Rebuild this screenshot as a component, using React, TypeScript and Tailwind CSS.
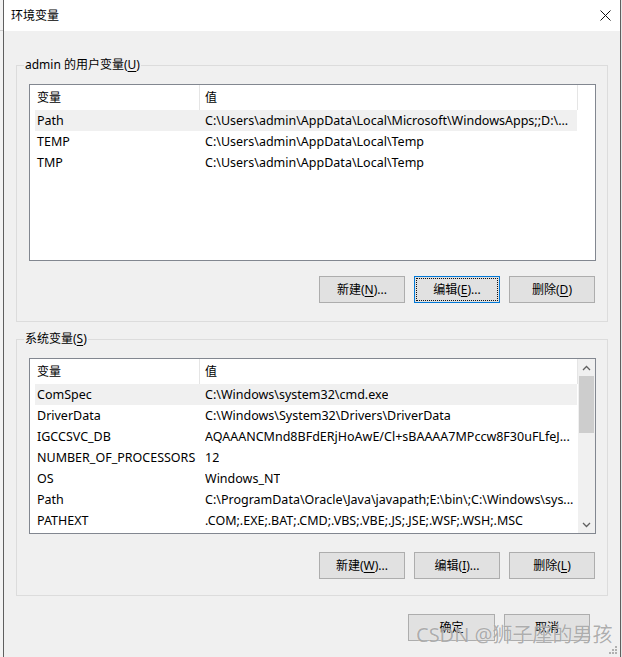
import React from "react";

const FONT = "font-['Noto_Sans','Noto_Sans_CJK_SC',sans-serif]";

type Row = { name: string; value: string; selected?: boolean };

const userRows: Row[] = [
  { name: "Path", value: "C:\\Users\\admin\\AppData\\Local\\Microsoft\\WindowsApps;;D:\\...", selected: true },
  { name: "TEMP", value: "C:\\Users\\admin\\AppData\\Local\\Temp" },
  { name: "TMP", value: "C:\\Users\\admin\\AppData\\Local\\Temp" },
];

const sysRows: Row[] = [
  { name: "ComSpec", value: "C:\\Windows\\system32\\cmd.exe", selected: true },
  { name: "DriverData", value: "C:\\Windows\\System32\\Drivers\\DriverData" },
  { name: "IGCCSVC_DB", value: "AQAAANCMnd8BFdERjHoAwE/Cl+sBAAAA7MPccw8F30uFLfeJ..." },
  { name: "NUMBER_OF_PROCESSORS", value: "12" },
  { name: "OS", value: "Windows_NT" },
  { name: "Path", value: "C:\\ProgramData\\Oracle\\Java\\javapath;E:\\bin\\;C:\\Windows\\sys..." },
  { name: "PATHEXT", value: ".COM;.EXE;.BAT;.CMD;.VBS;.VBE;.JS;.JSE;.WSF;.WSH;.MSC" },
];

function Header() {
  return (
    <div className="flex h-[25px] w-[548px] shrink-0 items-center border-r border-[#e5e5e5] text-[12px] text-black">
      <div className="flex h-full w-[170px] items-center border-r border-[#e5e5e5] pl-[7px]">变量</div>
      <div className="pl-[5px]">值</div>
    </div>
  );
}

function ListRows({ rows }: { rows: Row[] }) {
  return (
    <div className="flex flex-col">
      {rows.map((r, i) => (
        <div
          key={i}
          className={
            r.selected
              ? "ml-[5px] flex h-[21px] w-[542px] items-center whitespace-nowrap bg-[#f0f0f0] text-[12.5px] leading-[21px] text-black"
              : "ml-[5px] flex h-[21px] w-[542px] items-center whitespace-nowrap text-[12.5px] leading-[21px] text-black"
          }
        >
          <div className="w-[170px] shrink-0 overflow-hidden pl-[2px]">{r.name}</div>
          <div className="overflow-hidden">{r.value}</div>
        </div>
      ))}
    </div>
  );
}

function Btn({
  children,
  focused,
  w = "w-[86px]",
}: {
  children: React.ReactNode;
  focused?: boolean;
  w?: string;
}) {
  if (focused) {
    return (
      <div className={`flex h-[27px] ${w} items-center justify-center border border-[#0078d7] bg-[#e1e1e1] p-[1px] text-[12px] text-black`}>
        <div className="flex h-full w-full items-center justify-center border border-dotted border-[#111]">
          {children}
        </div>
      </div>
    );
  }
  return (
    <div className={`flex h-[27px] ${w} items-center justify-center border border-[#adadad] bg-[#e1e1e1] text-[12px] text-black`}>
      {children}
    </div>
  );
}

function U({ children }: { children: React.ReactNode }) {
  return <span className="underline underline-offset-[2px]">{children}</span>;
}

function Chevron({ up }: { up?: boolean }) {
  return (
    <svg width="9" height="6" viewBox="0 0 9 6">
      <path
        d={up ? "M1 5 L4.5 1.5 L8 5" : "M1 1 L4.5 4.5 L8 1"}
        fill="none"
        stroke="#606060"
        strokeWidth="1.3"
      />
    </svg>
  );
}

function GroupBox({
  label,
  children,
}: {
  label: React.ReactNode;
  children: React.ReactNode;
}) {
  return (
    <div className="relative h-[257px] w-[592px] border border-[#dcdcdc] pb-[18px] pl-[12px] pr-[11px] pt-[18px]">
      <div className="absolute left-[7px] top-[-9px] bg-[#f0f0f0] px-[1px] text-[12px] leading-[16px] text-black">
        {label}
      </div>
      {children}
    </div>
  );
}

export default function App() {
  return (
    <div className={`relative flex h-[657px] w-[622px] overflow-hidden bg-[#f0f0f0] ${FONT}`}>
      {/* strip of the window behind */}
      <div className="flex w-[3px] shrink-0 flex-col bg-[#f3f3f3]">
        <div className="h-[31px] border-b border-[#cfcfcf]" />
      </div>

      {/* dialog */}
      <div className="flex h-full w-[618px] shrink-0 flex-col border-x border-[#5f5f5f] bg-[#f0f0f0]">
        {/* title bar */}
        <div className="flex h-[31px] shrink-0 items-center justify-between bg-white pl-[7px] pr-[9px]">
          <span className="text-[12px] text-black">环境变量</span>
          <svg width="11" height="11" viewBox="0 0 11 11">
            <path d="M0.5 0.5 L10.5 10.5 M10.5 0.5 L0.5 10.5" stroke="#111" strokeWidth="1" />
          </svg>
        </div>

        {/* body */}
        <div className="flex flex-col pl-[12px] pr-[12px] pt-[34px]">
          <GroupBox
            label={
              <>
                admin 的用户变量(<U>U</U>)
              </>
            }
          >
            <div className="flex h-[177px] w-[567px] flex-col border border-[#828790] bg-white">
              <Header />
              <ListRows rows={userRows} />
            </div>
            <div className="mt-[15px] flex justify-end gap-[9px] pr-[1px]">
              <Btn>
                新建(<U>N</U>)...
              </Btn>
              <Btn focused>
                编辑(<U>E</U>)...
              </Btn>
              <Btn>
                删除(<U>D</U>)
              </Btn>
            </div>
          </GroupBox>

          <div className="mt-[17px]">
            <GroupBox
              label={
                <>
                  系统变量(<U>S</U>)
                </>
              }
            >
              <div className="flex h-[176px] w-[567px] border border-[#828790] bg-white">
                <div className="flex w-[548px] flex-col overflow-hidden">
                  <Header />
                  <ListRows rows={sysRows} />
                </div>
                <div className="flex w-[17px] flex-col bg-[#f0f0f0]">
                  <div className="flex h-[17px] items-center justify-center">
                    <Chevron up />
                  </div>
                  <div className="mx-[1px] h-[57px] bg-[#cdcdcd]" />
                  <div className="flex-1" />
                  <div className="flex h-[17px] items-center justify-center">
                    <Chevron />
                  </div>
                </div>
              </div>
              <div className="mt-[18px] flex justify-end gap-[9px] pr-[1px]">
                <Btn>
                  新建(<U>W</U>)...
                </Btn>
                <Btn>
                  编辑(<U>I</U>)...
                </Btn>
                <Btn>
                  删除(<U>L</U>)
                </Btn>
              </div>
            </GroupBox>
          </div>

          <div className="mt-[18px] flex justify-end gap-[9px] pr-[18px]">
            <Btn w="w-[87px]">确定</Btn>
            <Btn w="w-[86px]">取消</Btn>
          </div>
        </div>
      </div>

      <div className="w-[1px] shrink-0 bg-[#e6e6e6]" />

      {/* size grip */}
      <svg className="absolute bottom-[2px] right-[4px]" width="10" height="10" viewBox="0 0 10 10">
        <g fill="#b0b0b0">
          <rect x="7" y="1" width="2" height="2" />
          <rect x="4" y="4" width="2" height="2" />
          <rect x="7" y="4" width="2" height="2" />
          <rect x="1" y="7" width="2" height="2" />
          <rect x="4" y="7" width="2" height="2" />
          <rect x="7" y="7" width="2" height="2" />
        </g>
      </svg>

      {/* watermark */}
      <div className="pointer-events-none absolute left-[416px] top-[622px] whitespace-nowrap text-[20px] leading-[26px] text-[#8c8c8c]/70 [text-shadow:0_0_1px_rgba(255,255,255,0.8)]">
        CSDN @狮子座的男孩
      </div>
    </div>
  );
}
